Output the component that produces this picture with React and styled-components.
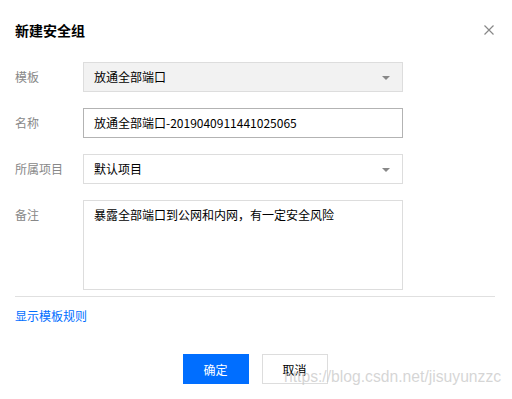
import styled, { createGlobalStyle } from 'styled-components'

const Global = createGlobalStyle`
  html, body {
    margin: 0;
    background: #fff;
    font-family: "Noto Sans CJK SC", "Liberation Sans", sans-serif;
  }
`

const Dialog = styled.div`
  position: relative;
  width: 512px;
  height: 399px;
  box-sizing: border-box;
  padding: 20px 17px 0 15px;
  background: #fff;
`

const Header = styled.div`
  display: flex;
  align-items: center;
  justify-content: space-between;
  height: 20px;
  margin-bottom: 22px;
`

const Title = styled.h3`
  margin: 0;
  font-size: 14px;
  font-weight: bold;
  color: #000;
  line-height: 20px;
`

const Close = styled.button`
  width: 12px;
  height: 12px;
  padding: 0;
  border: none;
  background: none;
  display: flex;
  align-items: center;
  justify-content: center;
`

const Form = styled.div`
  display: flex;
  flex-direction: column;
  gap: 16px;
`

const Row = styled.div`
  display: flex;
  align-items: ${p => (p.$top ? 'flex-start' : 'center')};
`

const Label = styled.label`
  width: 68px;
  flex: none;
  font-size: 12px;
  color: #888;
  line-height: 30px;
`

const Field = styled.div`
  position: relative;
  width: 320px;
  height: ${p => p.$h || 30}px;
  box-sizing: border-box;
  border: 1px solid ${p => (p.$active ? '#b3b3b3' : '#ddd')};
  background: ${p => (p.$disabled ? '#f2f2f2' : '#fff')};
  padding: ${p => (p.$multi ? '6px 10px' : '0 10px')};
  display: flex;
  align-items: ${p => (p.$multi ? 'flex-start' : 'center')};
  font-size: 12px;
  line-height: 16px;
  color: #000;
`

const Caret = styled.span`
  position: absolute;
  right: 12px;
  top: 13px;
  width: 0;
  height: 0;
  border-left: 4px solid transparent;
  border-right: 4px solid transparent;
  border-top: 4px solid #888;
`

const Divider = styled.hr`
  margin: 6px 0 0;
  border: none;
  border-top: 1px solid #e0e0e0;
`

const Link = styled.a`
  display: block;
  margin-top: 10px;
  font-size: 12px;
  line-height: 18px;
  color: #006eff;
  text-decoration: none;
`

const Footer = styled.div`
  display: flex;
  justify-content: center;
  gap: 13px;
  margin-top: 29px;
`

const Button = styled.button`
  width: 66px;
  height: 30px;
  box-sizing: border-box;
  font-family: inherit;
  font-size: 12px;
  border: 1px solid ${p => (p.$primary ? '#006eff' : '#ddd')};
  background: ${p => (p.$primary ? '#006eff' : '#fff')};
  color: ${p => (p.$primary ? '#fff' : '#000')};
  padding: 0;
`

const Watermark = styled.div`
  position: absolute;
  left: 284px;
  top: 368px;
  font-family: "Liberation Sans", Arial, sans-serif;
  font-size: 15.7px;
  color: rgba(200, 200, 200, 0.75);
  pointer-events: none;
  white-space: nowrap;
`

export default function App() {
  return (
    <>
      <Global />
      <Dialog>
        <Header>
          <Title>新建安全组</Title>
          <Close>
            <svg width="10" height="10" viewBox="0 0 10 10">
              <path d="M0.5 0.5 L9.5 9.5 M9.5 0.5 L0.5 9.5" stroke="#888" strokeWidth="1.2" fill="none" />
            </svg>
          </Close>
        </Header>
        <Form>
          <Row>
            <Label>模板</Label>
            <Field $disabled>
              放通全部端口
              <Caret />
            </Field>
          </Row>
          <Row>
            <Label>名称</Label>
            <Field $active>放通全部端口-2019040911441025065</Field>
          </Row>
          <Row>
            <Label>所属项目</Label>
            <Field>
              默认项目
              <Caret />
            </Field>
          </Row>
          <Row $top>
            <Label>备注</Label>
            <Field $multi $h={90}>暴露全部端口到公网和内网，有一定安全风险</Field>
          </Row>
        </Form>
        <Divider />
        <Link href="#">显示模板规则</Link>
        <Footer>
          <Button $primary>确定</Button>
          <Button>取消</Button>
        </Footer>
        <Watermark>https://blog.csdn.net/jisuyunzzc</Watermark>
      </Dialog>
    </>
  )
}
